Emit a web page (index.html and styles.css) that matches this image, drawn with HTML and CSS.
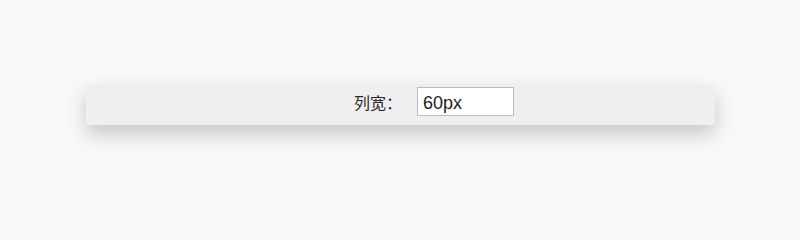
FILE: index.html
```html
<!DOCTYPE html>
<html lang="zh">
<head>
<meta charset="utf-8">
<link rel="stylesheet" href="styles.css">
</head>
<body>
<div class="page">
  <div class="bar">
    <label class="label" for="w">列宽：</label>
    <input id="w" class="field" type="text" value="60px">
  </div>
</div>
</body>
</html>
```
FILE: styles.css
```css
html, body {
  margin: 0;
  padding: 0;
  background: #f8f9f9;
}
.page {
  width: 800px;
  height: 208px;
  padding: 84px 0 0 86px;
  box-sizing: border-box;
}
.bar {
  width: 629px;
  height: 41px;
  box-sizing: border-box;
  background: #efefef;
  box-shadow: 0 9px 20px rgba(0, 0, 0, 0.2);
  display: flex;
  align-items: flex-start;
  padding: 3px 0 0 268px;
}
.label {
  font-family: "Noto Sans CJK SC", "Liberation Sans", sans-serif;
  font-size: 16px;
  line-height: 30px;
  color: #2a2a2a;
  width: 63px;
}
.field {
  width: 97px;
  height: 29px;
  box-sizing: border-box;
  margin: 0;
  border: 1px solid #bdbdbd;
  background: #fff;
  padding: 3px 5px 0;
  font-family: "Liberation Sans", Arial, sans-serif;
  font-size: 18px;
  color: #222;
  outline: none;
}
```
